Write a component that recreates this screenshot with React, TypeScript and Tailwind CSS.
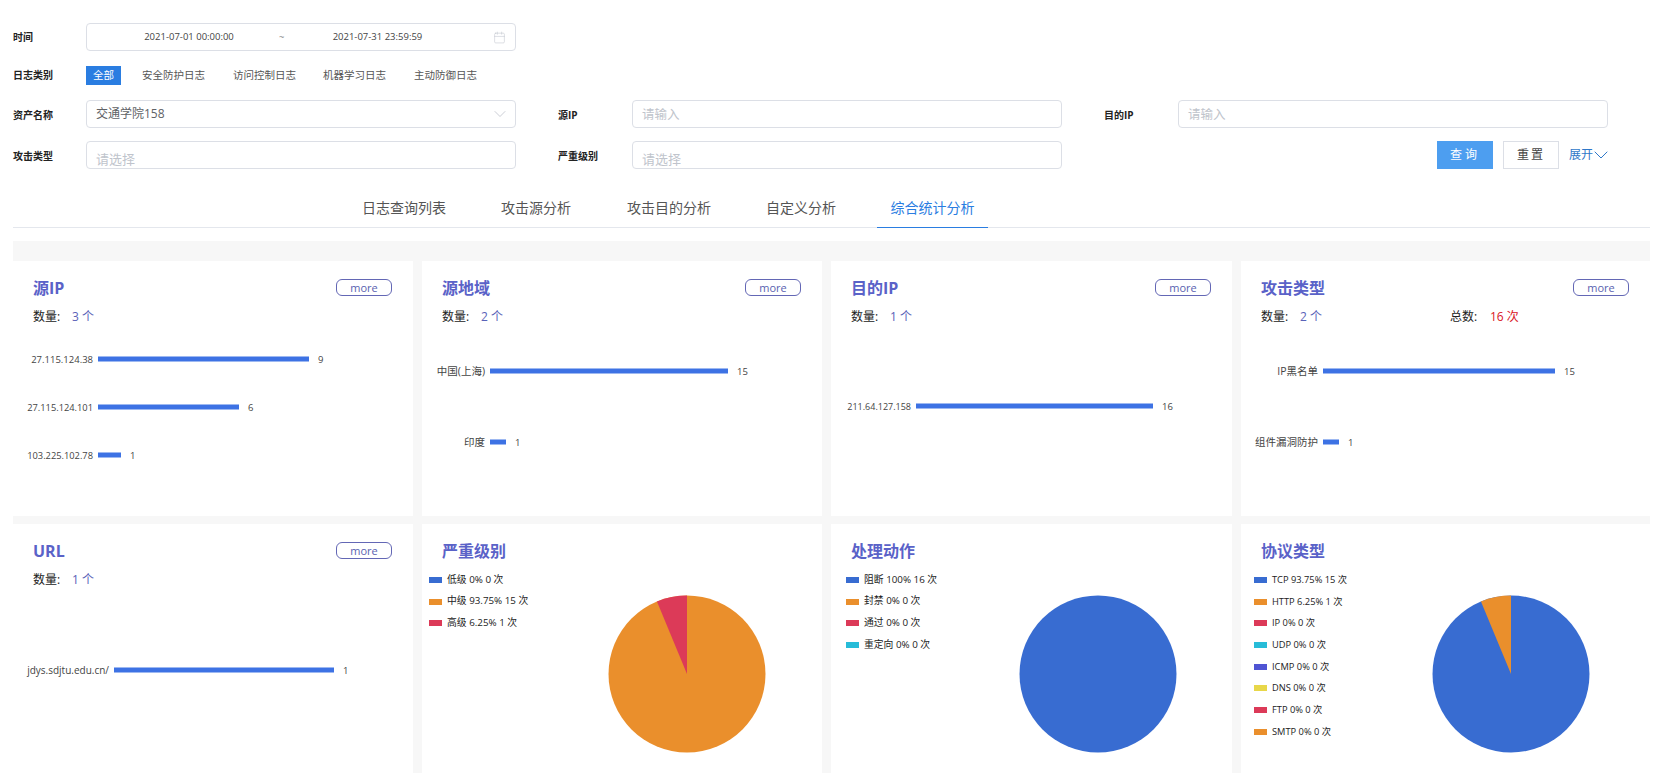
import { Calendar, ChevronDown } from "lucide-react";

const FONT = "font-['Open_Sans','Noto_Sans_CJK_SC',sans-serif]";

function Label({ children, low }: { children: string; low?: boolean }) {
  return <div className={`text-[10px] font-bold text-[#222] ${low ? "pt-[2px]" : ""}`}>{children}</div>;
}

function Field({ text, placeholder, chevron, low }: { text?: string; placeholder?: string; chevron?: boolean; low?: boolean }) {
  return (
    <div className={`flex h-[28px] items-center justify-between rounded-[4px] border border-[#dcdfe6] bg-white pl-[9px] ${chevron ? "pr-[5px]" : "pr-[10px]"}`}>
      {text ? (
        <span className="text-[12px] text-[#606266]">{text}</span>
      ) : (
        <span className={`leading-none text-[#c0c4cc] ${low ? "pt-[9px] text-[13px]" : "pt-[3px] text-[12.5px]"}`}>{placeholder}</span>
      )}
      {chevron && <ChevronDown size={20} strokeWidth={1} className="text-[#c0c4cc]" />}
    </div>
  );
}

type Bar = { label: string; y: number; x0: number; x1: number; value: number; fs: number };

function BarChart({ bars }: { bars: Bar[] }) {
  return (
    <svg width="400" height="185" className="block">
      {bars.map((b) => (
        <g key={b.label} fill="#444" fontFamily="Open Sans, Noto Sans CJK SC, sans-serif">
          <text x={b.x0 - 5} y={b.y + 3.5} textAnchor="end" fontSize={b.fs}>{b.label}</text>
          <rect x={b.x0} y={b.y - 2.5} width={b.x1 - b.x0} height="5" fill="#3d72e4" />
          <text x={b.x1 + 9} y={b.y + 3.5} fontSize="9.5">{b.value}</text>
        </g>
      ))}
    </svg>
  );
}

function Pie({ main, slice }: { main: string; slice?: string }) {
  const cx = 79;
  const cy = 79;
  const r = 78.5;
  const a = (22.5 * Math.PI) / 180;
  const px = cx - r * Math.sin(a);
  const py = cy - r * Math.cos(a);
  return (
    <svg width="158" height="158" className="block">
      <circle cx={cx} cy={cy} r={r} fill={main} />
      {slice && <path d={`M${cx} ${cy}L${cx} ${cy - r}A${r} ${r} 0 0 0 ${px} ${py}Z`} fill={slice} />}
    </svg>
  );
}

function Head({ title, more }: { title: string; more?: boolean }) {
  return (
    <div className="flex h-[26px] items-center justify-between">
      <div className="pt-[2px] text-[16px] font-bold leading-[26px] text-[#5a62c8]">{title}</div>
      {more && (
        <div className="flex h-[17px] w-[56px] items-center justify-center rounded-[6px] border border-[#6367b5] text-[11px] leading-none text-[#5a5fb0]">
          more
        </div>
      )}
    </div>
  );
}

function Count({ n, total }: { n: number; total?: number }) {
  return (
    <div className="mt-[9px] flex h-[16px] items-center text-[12px] leading-none">
      <span className="w-[39px] text-[#222]">数量:</span>
      <span className="text-[#5a62b8]">{n} 个</span>
      {total !== undefined && (
        <>
          <span className="ml-[128px] w-[40px] text-[#222]">总数:</span>
          <span className="text-[#d9141e]">{total} 次</span>
        </>
      )}
    </div>
  );
}

function BarCard({ title, n, total, bars }: { title: string; n: number; total?: number; bars: Bar[] }) {
  return (
    <div className="h-[255px] bg-white">
      <div className="h-[70px] pl-[20px] pr-[21px] pt-[13px]">
        <Head title={title} more />
        <Count n={n} total={total} />
      </div>
      <BarChart bars={bars} />
    </div>
  );
}

type Leg = { c: string; t: string };

function PieCard({ title, legend, main, slice, legendCls, pieCls }: { title: string; legend: Leg[]; main: string; slice?: string; legendCls: string; pieCls: string }) {
  return (
    <div className="h-[255px] bg-white">
      <div className="pl-[20px] pt-[13px]">
        <Head title={title} />
      </div>
      <div className="flex">
        <div className={`mt-[6px] w-[150px] shrink-0 ${legendCls}`}>
          {legend.map((l) => (
            <div key={l.t} className="flex h-[21.7px] items-center gap-[5px] text-[#222]">
              <span className={`h-[6px] w-[13px] ${l.c}`} />
              <span className="whitespace-nowrap">{l.t}</span>
            </div>
          ))}
        </div>
        <div className={`mt-[32px] ${pieCls}`}>
          <Pie main={main} slice={slice} />
        </div>
      </div>
    </div>
  );
}

const BLUE = "bg-[#386cd1]";
const ORANGE = "bg-[#ea8f2c]";
const RED = "bg-[#dc3a58]";

export default function App() {
  return (
    <div className={`h-[773px] w-[1666px] overflow-hidden bg-white ${FONT}`}>
      <div className="px-[13px] pt-[23px]">
        <div className="grid grid-cols-[73px_430px] items-center">
          <Label>时间</Label>
          <div className="flex h-[28px] items-center rounded-[4px] border border-[#dcdfe6] text-[9.5px] text-[#444]">
            <span className="ml-[57px] w-[90px] text-center">2021-07-01 00:00:00</span>
            <span className="ml-[45px] text-[#888]">~</span>
            <span className="ml-[48px] w-[90px] whitespace-nowrap text-center">2021-07-31 23:59:59</span>
            <Calendar size={13} strokeWidth={1} className="ml-[71px] text-[#c0c4cc]" />
          </div>
        </div>

        <div className="mt-[15px] grid h-[19px] grid-cols-[73px_1fr] items-center">
          <Label>日志类别</Label>
          <div className="flex items-center text-[10.5px] text-[#555]">
            <span className="flex h-[19px] w-[35px] items-center justify-center bg-[#2a7de1] text-white">全部</span>
            <span className="ml-[21px] w-[64px] whitespace-nowrap">安全防护日志</span>
            <span className="ml-[27px] w-[64px] whitespace-nowrap">访问控制日志</span>
            <span className="ml-[26px] w-[64px] whitespace-nowrap">机器学习日志</span>
            <span className="ml-[27px] w-[64px] whitespace-nowrap">主动防御日志</span>
          </div>
        </div>

        <div className="mt-[15px] grid grid-cols-[73px_430px_116px_430px_116px_430px] items-center">
          <Label low>资产名称</Label>
          <Field text="交通学院158" chevron />
          <div className="pl-[42px]"><Label low>源IP</Label></div>
          <Field placeholder="请输入" />
          <div className="pl-[42px]"><Label low>目的IP</Label></div>
          <Field placeholder="请输入" />
        </div>

        <div className="mt-[13px] grid grid-cols-[73px_430px_116px_430px_1fr] items-center">
          <Label low>攻击类型</Label>
          <Field placeholder="请选择" low />
          <div className="pl-[42px]"><Label low>严重级别</Label></div>
          <Field placeholder="请选择" low />
          <div className="flex items-center justify-end pr-[44px]">
            <div className="flex h-[28px] w-[56px] items-center justify-center bg-[#4d9ef0] text-[12px] tracking-[3px] text-white">查询</div>
            <div className="ml-[10px] flex h-[28px] w-[56px] items-center justify-center border border-[#dcdfe6] text-[12px] tracking-[2px] text-[#444]">重置</div>
            <div className="ml-[10px] flex items-center text-[12px] text-[#2f78c9]">
              展开<ChevronDown size={24} strokeWidth={1} className="-mx-[4px]" />
            </div>
          </div>
        </div>
      </div>

      <div className="ml-[13px] mt-[17px] flex h-[42px] w-[1637px] items-start border-b border-[#e4e7ed] pl-[349px] text-[14px] text-[#555]">
        <div className="mt-[12px] leading-[20px]">日志查询列表</div>
        <div className="ml-[55px] mt-[12px] leading-[20px]">攻击源分析</div>
        <div className="ml-[56px] mt-[12px] leading-[20px]">攻击目的分析</div>
        <div className="ml-[55px] mt-[12px] leading-[20px]">自定义分析</div>
        <div className="ml-[41px] flex h-[42px] w-[111px] justify-center border-b-[1px] border-[#2a7de1] pt-[12px] leading-[20px] text-[#2a7de1]">综合统计分析</div>
      </div>

      <div className="ml-[13px] mt-[13px] h-[600px] w-[1637px] bg-[#f7f7f7] pt-[20px]">
        <div className="grid grid-cols-[400px_400px_401px_409px] gap-x-[9px] gap-y-[8px]">
          <BarCard title="源IP" n={3} bars={[
            { label: "27.115.124.38", y: 28, x0: 85, x1: 296, value: 9, fs: 9.5 },
            { label: "27.115.124.101", y: 76, x0: 85, x1: 226, value: 6, fs: 9.3 },
            { label: "103.225.102.78", y: 124, x0: 85, x1: 108, value: 1, fs: 9.3 },
          ]} />
          <BarCard title="源地域" n={2} bars={[
            { label: "中国(上海)", y: 40, x0: 68, x1: 306, value: 15, fs: 10.5 },
            { label: "印度", y: 111, x0: 68, x1: 84, value: 1, fs: 10.5 },
          ]} />
          <BarCard title="目的IP" n={1} bars={[
            { label: "211.64.127.158", y: 75, x0: 85, x1: 322, value: 16, fs: 9 },
          ]} />
          <BarCard title="攻击类型" n={2} total={16} bars={[
            { label: "IP黑名单", y: 40, x0: 82, x1: 314, value: 15, fs: 10.5 },
            { label: "组件漏洞防护", y: 111, x0: 82, x1: 98, value: 1, fs: 10.5 },
          ]} />
          <BarCard title="URL" n={1} bars={[
            { label: "jdys.sdjtu.edu.cn/", y: 76, x0: 101, x1: 321, value: 1, fs: 10 },
          ]} />
          <PieCard title="严重级别" main="#ea8f2c" slice="#dc3a58" legendCls="ml-[7px] text-[9.8px]" pieCls="ml-[29px]" legend={[
            { c: BLUE, t: "低级 0% 0 次" },
            { c: ORANGE, t: "中级 93.75% 15 次" },
            { c: RED, t: "高级 6.25% 1 次" },
          ]} />
          <PieCard title="处理动作" main="#386cd1" legendCls="ml-[15px] text-[9.8px]" pieCls="ml-[23px]" legend={[
            { c: BLUE, t: "阻断 100% 16 次" },
            { c: ORANGE, t: "封禁 0% 0 次" },
            { c: RED, t: "通过 0% 0 次" },
            { c: "bg-[#27bcd8]", t: "重定向 0% 0 次" },
          ]} />
          <PieCard title="协议类型" main="#386cd1" slice="#ea8f2c" legendCls="ml-[13px] text-[9.3px]" pieCls="ml-[28px]" legend={[
            { c: BLUE, t: "TCP 93.75% 15 次" },
            { c: ORANGE, t: "HTTP 6.25% 1 次" },
            { c: RED, t: "IP 0% 0 次" },
            { c: "bg-[#27bcd8]", t: "UDP 0% 0 次" },
            { c: "bg-[#4f54d3]", t: "ICMP 0% 0 次" },
            { c: "bg-[#e8d749]", t: "DNS 0% 0 次" },
            { c: RED, t: "FTP 0% 0 次" },
            { c: ORANGE, t: "SMTP 0% 0 次" },
          ]} />
        </div>
      </div>
    </div>
  );
}
